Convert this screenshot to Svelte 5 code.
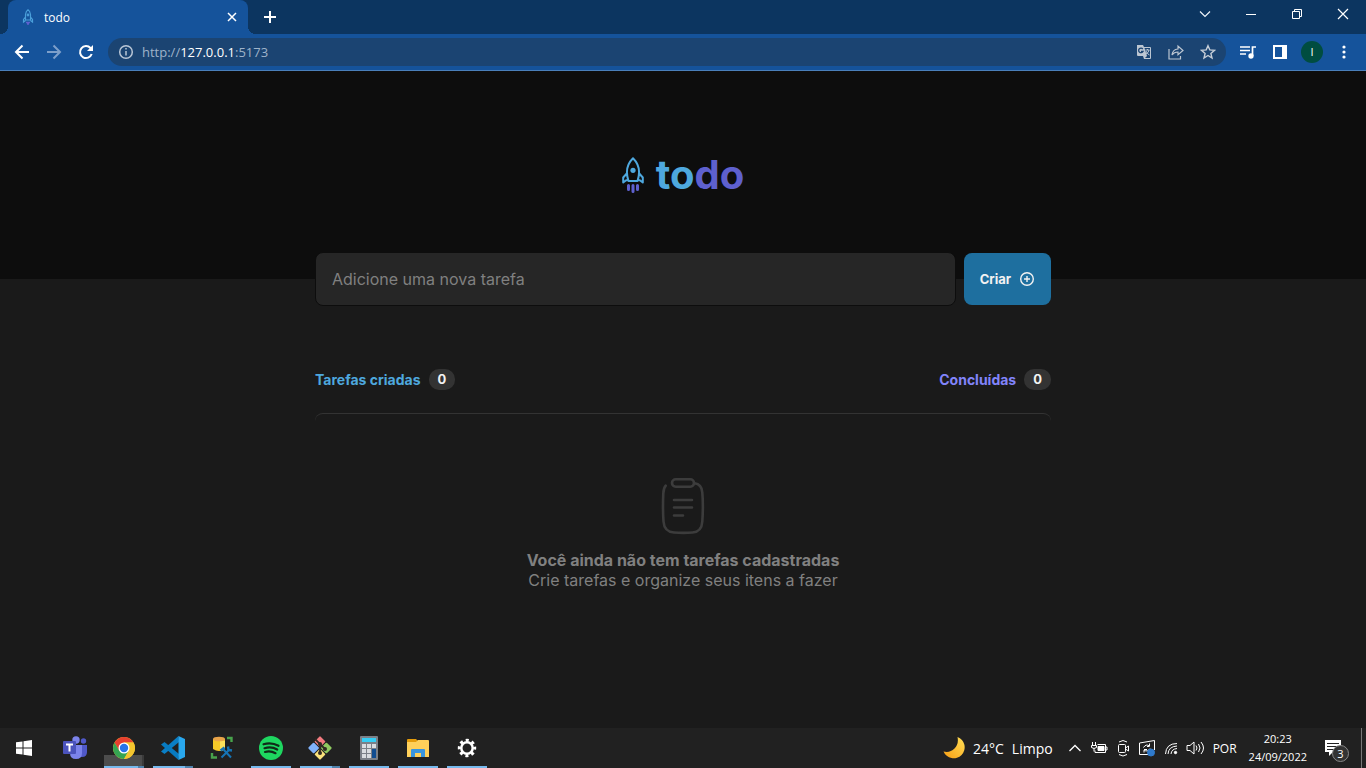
<script>
  let task = $state('');
  const created = 0;
  const done = 0;
</script>

<div class="screen">
  <header class="browser">
    <div class="tabs">
      <div class="tab">
        <svg width="16" height="16" viewBox="0 0 16 16" fill="none" stroke="#4a9fda" stroke-width="1.2"><path d="M5.5 11V5.500Q6 2 8 .8 10 2 10.500 5.500V11ZM5.500 8 3.500 10.500V13l2-1.500M10.500 8l2 2.500V13l-2-1.500"/><circle cx="8" cy="6" r=".8"/><path d="M6 13.500h4M7 15h2" stroke="#5e60ce" stroke-width="1.500"/></svg>
        <span>todo</span>
        <button class="close" aria-label="Fechar guia"><svg width="10" height="10" viewBox="0 0 10 10" stroke="#fff" stroke-width="1.500"><path d="m1 1 8 8M9 1 1 9"/></svg></button>
      </div>
      <button class="plus" aria-label="Nova guia"><svg width="14" height="14" viewBox="0 0 14 14" stroke="#fff" stroke-width="2"><path d="M7 1v12M1 7h12"/></svg></button>
      <div class="window">
        <button aria-label="Pesquisar guias"><svg width="12" height="12" viewBox="0 0 12 12" fill="none" stroke="#eef3f9" stroke-width="1.200"><path d="m1 3.500 5 5 5-5"/></svg></button>
        <button aria-label="Minimizar"><svg width="12" height="12" viewBox="0 0 12 12" stroke="#fff"><path d="M1 6.500h10"/></svg></button>
        <button aria-label="Restaurar"><svg width="12" height="12" viewBox="0 0 12 12" fill="none" stroke="#fff"><path d="M1.500 3.500h7v7h-7ZM3.500 3V1.500h7v7H9"/></svg></button>
        <button aria-label="Fechar"><svg width="12" height="12" viewBox="0 0 12 12" stroke="#fff" stroke-width="1.200"><path d="m1 1 10 10M11 1 1 11"/></svg></button>
      </div>
    </div>
    <div class="toolbar">
      <button aria-label="Voltar"><svg width="16" height="16" viewBox="0 0 16 16" fill="none" stroke="#fff" stroke-width="2"><path d="M15 8H2M8.500 1.500 2 8l6.500 6.500"/></svg></button>
      <button aria-label="Avançar"><svg width="16" height="16" viewBox="0 0 16 16" fill="none" stroke="#7d9fca" stroke-width="2"><path d="M1 8h13M7.500 1.500 14 8l-6.500 6.500"/></svg></button>
      <button aria-label="Recarregar"><svg width="16" height="16" viewBox="0 0 16 16" fill="none" stroke="#fff" stroke-width="2"><path d="M13.700 10A6 6 0 1 1 12.500 4L14 5.500"/><path d="M15 1v6H9Z" fill="#fff" stroke="none"/></svg></button>
      <div class="omnibox">
        <svg width="16" height="16" viewBox="0 0 16 16" fill="none" stroke="#b9c6d6" stroke-width="1.500"><circle cx="8" cy="8" r="6.300"/><path d="M8 7v4.500M8 4v1.600"/></svg>
        <span class="url">http://<b>127.0.0.1</b>:5173</span>
        <button aria-label="Traduzir"><svg width="16" height="16" viewBox="0 0 16 16"><path d="M1 1h6l1 2h6q1 0 1 1v10q0 1-1 1H8l-1-3H2q-1 0-1-1Z" fill="#bcc6d2"/><path d="M8.500 4H14v10H9l2-2-2.500-8Z" fill="#1b4472"/><path d="M6.800 5A2.300 2.300 0 1 0 7 7.500H5" fill="none" stroke="#1b4472" stroke-width="1.300"/><path d="M9.500 6h4M11.500 5v1m1.500 0q-.5 3-3 4m0-3q1 3 3.500 4" fill="none" stroke="#bcc6d2"/></svg></button>
        <button aria-label="Compartilhar"><svg width="16" height="16" viewBox="0 0 16 16" fill="none" stroke="#bcc6d2" stroke-width="1.200"><path d="M1 5v10h11.500v-3M4 11q.5-5.500 6-6V2l5 4.500-5 4.300V8Q6 8 4 11Z"/></svg></button>
        <button aria-label="Favoritar"><svg width="16" height="16" viewBox="0 0 16 16" fill="none" stroke="#c6ced8" stroke-width="1.400"><path d="m8 1.700 1.800 4.200 4.700.4-3.600 3.100 1.100 4.600-4-2.500L4 14l1.100-4.600-3.600-3.100 4.700-.4Z"/></svg></button>
      </div>
      <div class="extras">
        <button aria-label="Controlar mídia"><svg width="16" height="16" viewBox="0 0 16 16" fill="none" stroke="#fff" stroke-width="1.700"><path d="M0 3h10M0 6.500h10M0 10h6M12.500 12V3H16"/><circle cx="11" cy="12" r="1.800" fill="#fff"/></svg></button>
        <button aria-label="Painel lateral"><svg width="14" height="14" viewBox="0 0 14 14"><path d="M0 0h14v14H0Zm2 2v10h7V2Z" fill="#fff" fill-rule="evenodd"/></svg></button>
        <button aria-label="Perfil"><span class="avatar">I</span></button>
        <button aria-label="Menu"><svg width="4" height="14" viewBox="0 0 4 14" fill="#fff"><circle cx="2" cy="2" r="1.600"/><circle cx="2" cy="7" r="1.600"/><circle cx="2" cy="12" r="1.600"/></svg></button>
      </div>
    </div>
  </header>

  <main>
    <div class="hero">
      <svg width="22" height="36" viewBox="0 0 22 36" fill="none" stroke="#4ea8de" stroke-width="2" stroke-linejoin="round"><path d="M6.500 24C3.500 15 5 7 11 1.200 17 7 18.500 15 15.500 24ZM4.800 16.500 1.200 20.500v5l3-2.200h2M17.200 16.500l3.600 4v5l-3-2.200h-2"/><circle cx="11" cy="13.300" r="2.600" fill="#4ea8de" stroke="none"/><path d="M6.500 28.500v4M11 28.500v6M15.500 28.500v4" stroke="#5e60ce" stroke-width="3" stroke-linecap="round"/></svg>
      <h1>to<span>do</span></h1>
    </div>
    <div class="content">
      <form onsubmit={(e) => e.preventDefault()}>
        <input type="text" aria-label="Nova tarefa" placeholder="Adicione uma nova tarefa" bind:value={task} />
        <button>Criar
          <svg width="16" height="16" viewBox="0 0 16 16" fill="none" stroke="#f2f2f2" stroke-width="1.400"><circle cx="8" cy="8" r="6.300"/><path d="M8 5v6M5 8h6"/></svg>
        </button>
      </form>
      <div class="info">
        <p>Tarefas criadas <span>{created}</span></p>
        <p class="done">Concluídas <span>{done}</span></p>
      </div>
      <section class="empty">
        <svg width="44" height="58" viewBox="0 0 44 58" fill="none" stroke="#3c3c3c" stroke-width="2.600" stroke-linecap="round"><rect x="11" y="2.300" width="22" height="7.400" rx="3.700"/><path d="M33.500 6.200c5 .6 7.500 4 7.800 9.300.8 9 .7 19 0 29-.4 7-3.300 10.500-9.800 11q-9 .7-18.500 0C6 55 3 51.500 2.500 44.500q-.9-13-.2-28c.2-3.500.8-6 2.400-7.800M13 23h18M13 30.500h18M13 38.500h9"/></svg>
        <strong>Você ainda não tem tarefas cadastradas</strong>
        <p>Crie tarefas e organize seus itens a fazer</p>
      </section>
    </div>
  </main>

  <footer>
    <button class="start" aria-label="Iniciar"><svg width="16" height="16" viewBox="0 0 16 16" fill="#fff"><path d="m0 2.300 6.500-.9v6.100H0ZM7.500 1.200 16 0v7.500H7.500ZM0 8.500h6.500v6.100L0 13.700ZM7.500 8.500H16V16l-8.500-1.200Z"/></svg></button>
    <nav>
      <button aria-label="Teams"><svg width="24" height="24" viewBox="0 0 24 24"><circle cx="13" cy="4" r="3.700" fill="#7b83eb"/><circle cx="20.500" cy="5" r="2.700" fill="#5059c9"/><path d="M16 9h8v7q0 5-5 5h-3Z" fill="#5059c9"/><path d="M7 9h12v8q0 6-6 6t-6-6Z" fill="#7b83eb"/><rect y="5" width="13" height="13" rx="1" fill="#4b53bc"/><path d="M3 8.500h7M6.500 8v7.500" stroke="#fff" stroke-width="2"/></svg></button>
      <button class="open active multi" aria-label="Chrome"><svg width="22" height="22" viewBox="0 0 22 22"><circle cx="11" cy="11" r="11" fill="#f4c52e"/><path d="M1.500 5.500A11 11 0 0 1 20.500 5.500H11L6.200 13.700Z" fill="#e7402f"/><path d="M1.500 5.500 6.300 13.700 15.700 13.700 11 22A11 11 0 0 1 1.500 5.500Z" fill="#35a452"/><path d="M20.500 5.500H11l4.800 8.200L11 22A11 11 0 0 0 20.500 5.500Z" fill="#f4c52e"/><circle cx="11" cy="11" r="5.500" fill="#fff"/><circle cx="11" cy="11" r="4.200" fill="#2874e8"/></svg></button>
      <button class="open multi" aria-label="Visual Studio Code"><svg width="24" height="24" viewBox="0 0 24 24"><path d="m17.500 0 .5 6L3.500 18 0 15.500Z" fill="#0a7fc6"/><path d="M0 8.500 3.500 6 18 18l-.5 6Z" fill="#087bc1"/><path d="m17.500 0 6.500 3v18l-6.500 3Z" fill="#29a7ed"/></svg></button>
      <button aria-label="Banco de dados"><svg width="24" height="24" viewBox="0 0 24 24"><path d="M3 3v10q6 4 12 0V3Z" fill="#f5c928"/><path d="M10 5h5v8q-2 2-5 2Z" fill="#ffe15a"/><ellipse cx="9" cy="3" rx="6" ry="2.300" fill="#e9a449"/><path d="M17 2h4.500v4M2 17v4.500h5" fill="none" stroke="#48a34c" stroke-width="2.400"/><path d="m13 13 8 8.500M19 14l-7.500 7.500" stroke="#1674b5" stroke-width="2"/><path d="m10.500 14.500 4-3M18 10.500l.5 3.500 3.500.5" stroke="#1674b5" stroke-width="2.400" fill="none"/></svg></button>
      <button class="open" aria-label="Spotify"><svg width="24" height="24" viewBox="0 0 24 24"><circle cx="12" cy="12" r="12" fill="#1ed760"/><path d="M4.500 8.300q8-2.300 15 1.500M5.500 12.200q7-2 12.700 1.300M6 16q5.500-1.500 10.500 1.200" fill="none" stroke="#102b19" stroke-width="2.200" stroke-linecap="round"/></svg></button>
      <button class="open multi" aria-label="Git"><svg width="24" height="24" viewBox="0 0 24 24"><g transform="rotate(45 12 12)"><rect x="3.500" y="3.500" width="8" height="8" rx="1" fill="#f37b80"/><rect x="12.500" y="3.500" width="8" height="8" rx="1" fill="#8fca60"/><rect x="3.500" y="12.500" width="8" height="8" rx="1" fill="#80b2fb"/><rect x="12.500" y="12.500" width="8" height="8" rx="1" fill="#fae27c"/></g><path d="m7 3 5 5v9M12 8l5 5" fill="none" stroke="#302923" stroke-width="1.800"/><g fill="#302923"><circle cx="12" cy="8" r="2"/><circle cx="12" cy="17" r="2"/><circle cx="17" cy="13" r="2"/></g></svg></button>
      <button class="open" aria-label="Calculadora"><svg width="18" height="24" viewBox="0 0 18 24"><rect width="18" height="24" rx="1" fill="#7b8088"/><path fill="#35cdf4" d="M2 2h14v4H2Z"/><path fill="#d9dce0" d="M2 8h4v4H2Zm5 0h4v4H7Zm5 0h4v4h-4ZM2 13h4v4H2Zm5 0h4v4H7Zm-5 5h4v4H2Zm5 0h4v4H7Z"/><path fill="#114d91" d="M12 13h4v9h-4Z"/></svg></button>
      <button class="open" aria-label="Explorador"><svg width="22" height="20" viewBox="0 0 22 20"><path d="M0 2q0-1 1-1h8l2 2h11v15H0Z" fill="#e59c0b"/><path d="M0 4h9l2-2h10q1 0 1 1v16H0Z" fill="#ffd05a"/><path d="M4 19v-7q0-1 1-1h12q1 0 1 1v7h-4v-4H8v4Z" fill="#3995de"/></svg></button>
      <button class="open" aria-label="Configurações"><svg width="20" height="20" viewBox="0 0 20 20" fill="none" stroke="#fff"><circle cx="10" cy="10" r="5.700" stroke-width="2.500"/><circle cx="10" cy="10" r="7.700" stroke-width="3" stroke-dasharray="3 3.047" stroke-dashoffset="1.500"/></svg></button>
    </nav>
    <div class="tray">
      <button class="weather"><svg width="22" height="22" viewBox="0 0 22 22"><defs><linearGradient id="moon" x1="1" y1="0" x2="0" y2="1"><stop stop-color="#ffdf57"/><stop offset="1" stop-color="#f79d13"/></linearGradient></defs><path d="M14.500 0A11 11 0 1 1 .5 14.500Q7 16 11.500 11.500T14.500 0Z" fill="url(#moon)"/></svg><span>24°C</span><span>Limpo</span></button>
      <div class="icons">
        <svg viewBox="0 0 24 24"><path d="m6.500 15 5.500-5.500 5.500 5.500" stroke-width="1.300"/></svg>
        <svg viewBox="0 0 24 24"><path d="M10.500 8.500h8v8H8v-2M19 11h1v3h-1M5.500 6v3M8.500 6v3M4.500 9.500h5v2q-2.500 2-5 0ZM7 12.500v3"/><path d="M11 10.500h6v4h-6Z" fill="#fff"/></svg>
        <svg viewBox="0 0 24 24"><rect x="7.500" y="8.500" width="7" height="8" rx="1"/><path d="m14.500 12 3-2v5l-3-2M8 6q4-3 8 0M8 18.500q4 3 8 0"/></svg>
        <svg viewBox="0 0 24 24"><path d="M13 18.500H4.500V7L19.500 4.500V14"/><path d="M8.500 11.500q2.500-4 6-1.500V7.500m0 3H12M15 12.500q-2.500 4-6 1.500v2.500m0-3H12"/><circle cx="16" cy="16.500" r="3.500" fill="#2f7acc" stroke="#2f7acc"/></svg>
        <svg viewBox="0 0 24 24"><path d="M6.500 18Q7 7.500 18 7.500M9 18q.5-7.500 9-8M12 18q.5-5 6-5.500"/><circle cx="16.500" cy="16.500" r="1.200" fill="#fff"/></svg>
        <svg viewBox="0 0 24 24"><path d="M4 9.500h3l4-3.500v12l-4-3.500H4ZM13 9.500q2 2.500 0 5M15.500 8q3 4 0 8M18 6q5 6 0 12"/></svg>
      </div>
      <span class="lang">POR</span>
      <time><span>20:23</span><span>24/09/2022</span></time>
      <button class="notes" aria-label="Notificações"><svg width="18" height="16" viewBox="0 0 18 16"><path d="M1 0h16v12H9l-4 4v-4H1Z" fill="#fff"/><path d="M3 3.500h12M3 6.500h12M3 9.500h8" stroke="#222"/></svg><span>3</span></button>
      <span class="edge"></span>
    </div>
  </footer>
</div>

<style>
  :global(body) { margin: 0; background: #1a1a1a; }
  * { box-sizing: border-box; }
  button { border: 0; padding: 0; background: none; color: inherit; font: inherit; display: flex; align-items: center; justify-content: center; flex: none; }
  svg { flex: none; }
  h1, p { margin: 0; }
  .screen { min-height: 100vh; display: flex; flex-direction: column; color: #fff; font-family: Inter, sans-serif; }
  .browser { font-family: "Open Sans", sans-serif; background: #15539b; border-bottom: 1px solid #4a7fba; }
  .tabs { display: flex; height: 34px; background: #0c3560; padding-left: 8px; }
  .tab { position: relative; display: flex; align-items: center; gap: 8px; width: 240px; padding: 0 10px 0 12px; background: #15539b; border-radius: 8px 8px 0 0; font-size: 12px; }
  .tab::before, .tab::after { content: ""; position: absolute; bottom: 0; width: 8px; height: 8px; }
  .tab::before { left: -8px; background: radial-gradient(circle at 0 0, transparent 8px, #15539b 8px); }
  .tab::after { right: -8px; background: radial-gradient(circle at 100% 0, transparent 8px, #15539b 8px); }
  .close { width: 12px; height: 12px; margin-left: auto; }
  .plus { width: 44px; }
  .window { display: flex; height: 28px; margin-left: auto; }
  .window button { width: 46px; }
  .toolbar { display: flex; align-items: center; height: 36px; padding: 0 6px; }
  .toolbar button { width: 32px; height: 28px; }
  .omnibox { flex: 1; display: flex; align-items: center; height: 28px; margin: 0 6px; padding: 0 2px 0 10px; border-radius: 14px; background: #1b4472; }
  .url { flex: 1; margin-left: 8px; font-size: 13px; color: #9fb3ca; }
  .url b { color: #fff; font-weight: 400; }
  .extras { display: flex; }
  .avatar { width: 22px; height: 22px; border-radius: 50%; background: #004d40; font-size: 11px; line-height: 22px; }
  main { flex: 1; }
  .hero { height: 208px; background: #0d0d0d; display: flex; align-items: center; justify-content: center; gap: 12px; }
  h1 { font-size: 40px; line-height: 48px; font-weight: 700; color: #4ea8de; }
  h1 span { color: #5e60ce; }
  .content { max-width: 768px; margin: -27px auto 0; padding: 0 16px; }
  form { display: flex; align-items: center; gap: 8px; }
  input { flex: 1; min-width: 0; height: 54px; padding: 0 16px; border: 1px solid #0d0d0d; border-radius: 8px; background: #262626; color: #f2f2f2; font: 16px Inter, sans-serif; }
  input::placeholder { color: #808080; opacity: 1; }
  form button { height: 52px; padding: 0 16px; gap: 8px; border-radius: 8px; background: #1e6f9f; color: #f2f2f2; font-size: 13px; font-weight: 700; }
  .info { display: flex; justify-content: space-between; margin-top: 63px; font-size: 14px; line-height: 20px; font-weight: 700; color: #4ea8de; }
  .info p { display: flex; align-items: center; gap: 8px; }
  .info .done { color: #8284fa; }
  .info span { padding: 0 9px; border-radius: 10px; background: #333; color: #f2f2f2; font-size: 13px; line-height: 21px; }
  .empty { display: flex; flex-direction: column; align-items: center; margin-top: 23px; padding: 63px 24px; border-top: 1px solid #333; border-radius: 8px; color: #808080; font-size: 16px; line-height: 20px; text-align: center; }
  .empty strong { margin-top: 15px; }
  footer { display: flex; justify-content: space-between; height: 40px; background: #212121; font-family: "Open Sans", sans-serif; }
  .start { width: 48px; }
  nav { display: flex; gap: 9px; margin: 0 auto 0 7px; }
  nav button { width: 40px; background: linear-gradient(transparent, transparent) bottom / 100% 2px no-repeat; }
  nav .open { background-image: linear-gradient(#76b9ed, #76b9ed); }
  nav .multi { background-image: linear-gradient(90deg, #76b9ed 32px, #4f82ab 32px); }
  nav .active { background: linear-gradient(90deg, #76b9ed 34px, #4f82ab 34px) bottom / 100% 2px no-repeat, linear-gradient(90deg, #4c4c4c 38px, #3a3a3a 38px) bottom / 100% 13px no-repeat; }
  .tray { display: flex; align-items: center; }
  .weather { gap: 8px; font-size: 14px; margin-right: 10px; }
  .icons { display: flex; }
  .icons svg { width: 24px; height: 24px; fill: none; stroke: #fff; stroke-width: 1; }
  .lang { margin-left: 6px; font-size: 12px; }
  time { display: flex; flex-direction: column; align-items: center; margin-left: 12px; font-size: 11px; line-height: 18px; }
  .notes { position: relative; width: 22px; height: 24px; margin: 0 17px 0 15px; }
  .notes span { position: absolute; left: 10px; top: 9px; width: 17px; height: 17px; border: 1px solid #888; border-radius: 50%; background: #333; font-size: 11px; line-height: 15px; }
  .edge { align-self: stretch; width: 1px; margin-right: 4px; background: #777; }
</style>
